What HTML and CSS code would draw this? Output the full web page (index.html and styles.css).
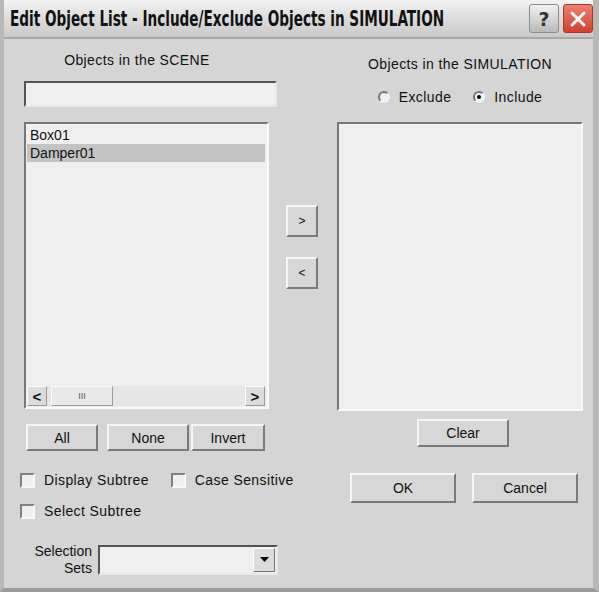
FILE: index.html
```html
<!DOCTYPE html>
<html lang="en">
<head>
  <meta charset="UTF-8">
  <title>Edit Object List</title>
  <link rel="stylesheet" href="styles.css">
</head>
<body>
  <div class="window">
    <div class="titlebar">
      <div class="title-wrap">
        <span class="title">Edit Object List - Include/Exclude Objects in SIMULATION</span>
      </div>
      <div class="caption-buttons">
        <div class="cap-btn help">?</div>
        <div class="cap-btn close">
          <svg width="18" height="18" viewBox="0 0 18 18">
            <path d="M3 3 L15 15 M15 3 L3 15" stroke="#fff" stroke-width="3" stroke-linecap="round"/>
          </svg>
        </div>
      </div>
    </div>

    <div class="client">
      <div class="col-left">
        <div class="label scene-label">Objects in the SCENE</div>
        <div class="edit"></div>
        <div class="listbox scene-list">
          <div class="items">
            <div class="item">Box01</div>
            <div class="item selected">Damper01</div>
          </div>
          <div class="hscroll">
            <div class="sb-btn">&lt;</div>
            <div class="sb-track">
              <div class="sb-thumb">III</div>
            </div>
            <div class="sb-btn">&gt;</div>
          </div>
        </div>
        <div class="btn-row">
          <div class="btn btn-all">All</div>
          <div class="btn btn-none">None</div>
          <div class="btn btn-invert">Invert</div>
        </div>
        <div class="check-row">
          <label class="check"><span class="box"></span>Display Subtree</label>
          <label class="check case"><span class="box"></span>Case Sensitive</label>
        </div>
        <div class="check-row second">
          <label class="check"><span class="box"></span>Select Subtree</label>
        </div>
        <div class="sets-row">
          <div class="sets-label">Selection<br>Sets</div>
          <div class="combo">
            <div class="combo-btn">
              <svg width="9" height="6" viewBox="0 0 9 6"><path d="M0 0 H9 L4.5 5 Z" fill="#000"/></svg>
            </div>
          </div>
        </div>
      </div>

      <div class="col-mid">
        <div class="btn arrow">&gt;</div>
        <div class="btn arrow">&lt;</div>
      </div>

      <div class="col-right">
        <div class="label sim-label">Objects in the SIMULATION</div>
        <div class="radios">
          <label class="radio"><span class="dot"></span>Exclude</label>
          <label class="radio on"><span class="dot"></span>Include</label>
        </div>
        <div class="listbox sim-list"></div>
        <div class="btn btn-clear">Clear</div>
        <div class="ok-row">
          <div class="btn btn-ok">OK</div>
          <div class="btn btn-cancel">Cancel</div>
        </div>
      </div>
    </div>
  </div>
</body>
</html>
```

FILE: styles.css
```css
body {
  margin: 0;
  background-color: #ffffff;
  font-family: "Liberation Sans", Arial, sans-serif;
  font-size: 14px;
  color: #111;
}

.window {
  width: 599px;
  height: 592px;
  box-sizing: border-box;
  background-color: #d5d5d5;
  border-left: 4px solid #b8b8b8;
  border-right: 6px solid #b8b8b8;
  border-bottom: 4px solid #9a9a9a;
  overflow: hidden;
}

.titlebar {
  height: 39px;
  margin-left: -4px;
  margin-right: -6px;
  box-sizing: border-box;
  display: flex;
  align-items: center;
  padding: 0 6px 0 10px;
  background: linear-gradient(#f4f4f4, #e0e0e0 40%, #c9c9c9);
  border-bottom: 2px solid #a9a9a9;
}

.title-wrap {
  flex: 1;
  min-width: 0;
}

.title {
  display: inline-block;
  font-family: "DejaVu Sans Condensed", "DejaVu Sans", sans-serif;
  font-weight: bold;
  font-size: 21px;
  color: #111;
  white-space: nowrap;
  transform: scaleX(0.72);
  transform-origin: left center;
}

.caption-buttons {
  display: flex;
  gap: 4px;
}

.cap-btn {
  width: 30px;
  height: 29px;
  box-sizing: border-box;
  border-radius: 3px;
  display: flex;
  align-items: center;
  justify-content: center;
  font-family: "DejaVu Sans", sans-serif;
  font-weight: bold;
  font-size: 19px;
}

.help {
  background: linear-gradient(#f2f2f2, #b9b9b9);
  border: 1px solid #8a8a8a;
  color: #333;
}

.close {
  background: linear-gradient(#ee8070, #d4402c);
  border: 1px solid #9c3b30;
}

.client {
  display: flex;
  padding: 13px 0 0 16px;
}

.col-left {
  width: 266px;
}

.label {
  text-align: center;
  line-height: 16px;
  letter-spacing: 0.4px;
}

.scene-label {
  width: 234px;
}

.edit {
  width: 253px;
  height: 26px;
  margin: 13px 0 0 4px;
  box-sizing: border-box;
  background-color: #efefef;
  border: 2px solid;
  border-color: #555 #e8e8e8 #e8e8e8 #555;
}

.listbox {
  box-sizing: border-box;
  background-color: #efefef;
  border: 2px solid;
  border-color: #777 #fafafa #fafafa #777;
}

.scene-list {
  width: 245px;
  height: 287px;
  margin: 15px 0 0 4px;
  display: flex;
  flex-direction: column;
  justify-content: space-between;
  padding: 2px 2px 1px 1px;
}

.item {
  height: 18px;
  line-height: 18px;
  padding-left: 3px;
}

.item.selected {
  background-color: #c4c4c4;
}

.hscroll {
  height: 20px;
  display: flex;
  background-color: #e6e6e6;
}

.sb-btn,
.sb-thumb {
  box-sizing: border-box;
  border: 1px solid;
  border-color: #fcfcfc #999 #999 #fcfcfc;
  background-color: #dcdcdc;
}

.sb-btn {
  width: 20px;
  display: flex;
  align-items: center;
  justify-content: center;
  font-weight: bold;
  font-size: 15px;
}

.sb-track {
  flex: 1;
  padding-left: 4px;
}

.sb-thumb {
  width: 62px;
  height: 20px;
  display: flex;
  align-items: center;
  justify-content: center;
  font-size: 9px;
  color: #555;
  background-color: #e9e9e9;
}

.btn {
  box-sizing: border-box;
  display: flex;
  align-items: center;
  justify-content: center;
  background-color: #d7d7d7;
  border: 2px solid;
  border-color: #f6f6f6 #7a7a7a #7a7a7a #f6f6f6;
}

.btn-row {
  display: flex;
  margin: 15px 0 0 6px;
  height: 27px;
}

.btn-all { width: 72px; }
.btn-none { width: 82px; margin-left: 9px; }
.btn-invert { width: 74px; margin-left: 2px; }

.check-row {
  display: flex;
  margin-top: 21px;
  height: 16px;
  white-space: nowrap;
}

.check-row.second {
  margin-top: 15px;
}

.check {
  display: flex;
  align-items: center;
  gap: 9px;
  letter-spacing: 0.4px;
}

.check.case {
  margin-left: 22px;
}

.box {
  width: 15px;
  height: 15px;
  box-sizing: border-box;
  background-color: #efefef;
  border: 2px solid;
  border-color: #808080 #f8f8f8 #f8f8f8 #808080;
}

.sets-row {
  display: flex;
  align-items: center;
  margin-top: 24px;
}

.sets-label {
  width: 72px;
  text-align: right;
  line-height: 17px;
}

.combo {
  flex: none;
  width: 180px;
  height: 30px;
  margin-left: 6px;
  box-sizing: border-box;
  background-color: #efefef;
  border: 2px solid;
  border-color: #555 #e8e8e8 #e8e8e8 #555;
  display: flex;
  justify-content: flex-end;
  padding: 1px;
}

.combo-btn {
  width: 22px;
  box-sizing: border-box;
  display: flex;
  align-items: center;
  justify-content: center;
  background-color: #dcdcdc;
  border: 1px solid;
  border-color: #fcfcfc #777 #777 #fcfcfc;
}

.col-mid {
  width: 51px;
  display: flex;
  flex-direction: column;
  align-items: flex-start;
  gap: 20px;
  padding-top: 153px;
}

.arrow {
  width: 32px;
  height: 32px;
  font-size: 12px;
}

.col-right {
  width: 246px;
  display: flex;
  flex-direction: column;
}

.sim-label {
  margin-top: 4px;
}

.radios {
  display: flex;
  justify-content: center;
  gap: 22px;
  margin-top: 17px;
  line-height: 16px;
  letter-spacing: 0.4px;
}

.radio {
  display: flex;
  align-items: center;
  gap: 9px;
}

.dot {
  width: 12px;
  height: 12px;
  box-sizing: border-box;
  border-radius: 50%;
  background-color: #f0f0f0;
  border: 2px solid;
  border-color: #777 #f4f4f4 #f4f4f4 #777;
  display: flex;
  align-items: center;
  justify-content: center;
}

.radio.on .dot::after {
  content: "";
  width: 4px;
  height: 4px;
  border-radius: 50%;
  background-color: #000;
}

.sim-list {
  width: 246px;
  height: 289px;
  margin-top: 17px;
}

.btn-clear {
  width: 92px;
  height: 28px;
  margin: 8px 0 0 80px;
}

.ok-row {
  display: flex;
  margin: 26px 0 0 13px;
  gap: 16px;
}

.btn-ok,
.btn-cancel {
  width: 106px;
  height: 30px;
}
```
